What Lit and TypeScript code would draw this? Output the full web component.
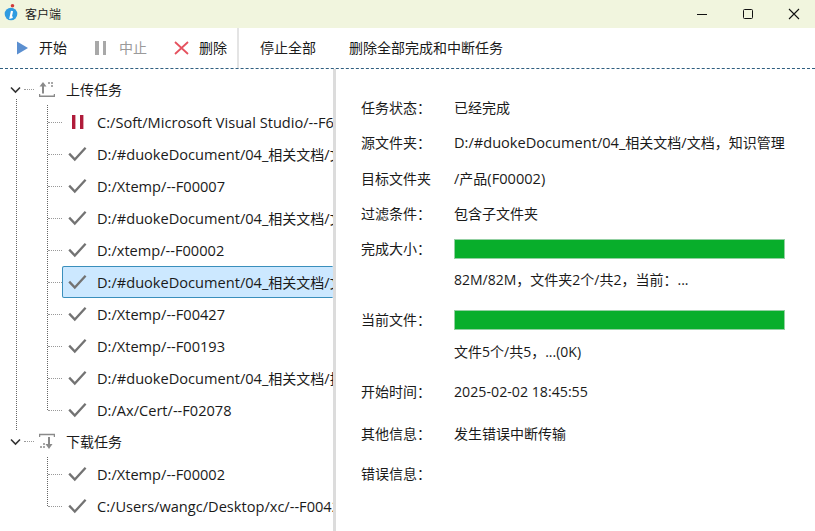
import { LitElement, html, css } from "lit";
import { customElement } from "lit/decorators.js";

const CHECK = html`<svg class="ic" width="19" height="16" viewBox="0 0 19 16"><path d="M1.2 7.6 L6.8 13.6 L17.6 1.8" fill="none" stroke="#737373" stroke-width="2.3"/></svg>`;
const PAUSE_RED = html`<svg class="ic" width="19" height="16" viewBox="0 0 19 16"><rect x="4" y="1" width="3.4" height="14" fill="#b01c3a"/><rect x="12" y="1" width="3.4" height="14" fill="#b01c3a"/></svg>`;

const upload = [
  { t: "C:/Soft/Microsoft Visual Studio/--F60012", i: PAUSE_RED },
  { t: "D:/#duokeDocument/04_相关文档/文档，知识管理--F00002", i: CHECK },
  { t: "D:/Xtemp/--F00007", i: CHECK },
  { t: "D:/#duokeDocument/04_相关文档/文档，知识管理--F00002", i: CHECK },
  { t: "D:/xtemp/--F00002", i: CHECK },
  { t: "D:/#duokeDocument/04_相关文档/文档，知识管理--F00002", i: CHECK, sel: true },
  { t: "D:/Xtemp/--F00427", i: CHECK },
  { t: "D:/Xtemp/--F00193", i: CHECK },
  { t: "D:/#duokeDocument/04_相关文档/技术文档--F00002", i: CHECK },
  { t: "D:/Ax/Cert/--F02078", i: CHECK },
];
const download = [
  { t: "D:/Xtemp/--F00002", i: CHECK },
  { t: "C:/Users/wangc/Desktop/xc/--F00421", i: CHECK },
];

/* Latin runs are set slightly larger than the CJK runs, as in the original UI font. */
function mixed(text: string) {
  return text
    .split(/([\u0020-\u007e]+)/)
    .filter((p) => p)
    .map((p) => (/^[\u0020-\u007e]/.test(p) ? html`<span class="l">${p}</span>` : p));
}

@customElement("app-root")
export class AppRoot extends LitElement {
  static styles = css`
    :host {
      display: flex;
      flex-direction: column;
      width: 815px;
      height: 531px;
      overflow: hidden;
      background: #fff;
      color: #1a1a1a;
      font-family: "Open Sans", "Noto Sans CJK SC", sans-serif;
      font-size: 14px;
    }
    .l { font-size: 14.6px; }
    .date .l { font-size: 14.2px; }
    .digits .l { font-size: 14px; }
    .title {
      height: 28px;
      background: #f1f5de;
      display: flex;
      align-items: center;
      flex: none;
    }
    .logo { margin-left: 4px; margin-right: 4px; }
    .title-text { font-size: 12px; flex: 1; padding-bottom: 1px; }
    .win {
      width: 46px;
      height: 28px;
      padding-left: 3px;
      box-sizing: border-box;
      display: flex;
      align-items: center;
      justify-content: center;
    }
    .toolbar {
      height: 40px;
      flex: none;
      display: flex;
      align-items: stretch;
      border-bottom: 1px dashed #2f5f80;
    }
    .tb { display: flex; align-items: center; }
    .tb span { padding-bottom: 2px; }
    .tb svg { flex: none; }
    .start { padding-left: 16px; }
    .start span { margin-left: 10px; }
    .stop { margin-left: 28px; color: #9a9a9a; }
    .stop span { margin-left: 13px; }
    .del { margin-left: 27px; }
    .del span { margin-left: 10px; }
    .sep { width: 2px; background: #e4e4e4; margin-left: 10px; }
    .stopall { margin-left: 21px; }
    .delall { margin-left: 33px; }
    .main { flex: 1; display: flex; min-height: 0; }
    .tree {
      width: 333px;
      flex: none;
      overflow: hidden;
      padding-top: 5px;
      box-sizing: border-box;
    }
    .treebody { position: relative; }
    .split { width: 3px; flex: none; background: #dcdcdc; }
    .group { position: relative; }
    .row {
      height: 32px;
      display: flex;
      align-items: center;
      white-space: nowrap;
      position: relative;
      box-sizing: border-box;
    }
    .row > span.t { padding-bottom: 1px; }
    .grow { padding-left: 10px; }
    .gicon { position: absolute; left: 39px; top: 7px; }
    .gicon svg { display: block; }
    .gtext { position: absolute; left: 66px; padding-bottom: 2px; }
    .gdots {
      position: absolute;
      left: 24px;
      width: 10px;
      top: 15px;
      border-top: 1px dotted #999;
    }
    .chev { flex: none; margin-top: -1px; }
    .item { margin-left: 62px; padding-left: 5px; border: 1px solid transparent; }
    .item.sel {
      background: #cce8ff;
      border-color: #3a8fbc;
      border-right-color: transparent;
      border-radius: 2px 0 0 2px;
    }
    .item::before {
      content: "";
      position: absolute;
      left: -15px;
      width: 14px;
      top: 15px;
      border-top: 1px dotted #999;
    }
    .ic { flex: none; margin-right: 10px; }
    .vline1, .vline2 {
      position: absolute;
      border-left: 1px dotted #666;
    }
    .vline1 { left: 16px; top: 25px; height: 331px; }
    .vline2 { left: 47px; top: 31px; bottom: 16px; }
    .detail {
      flex: 1;
      padding: 28px 30px 0 25px;
      box-sizing: border-box;
      min-width: 0;
    }
    .f {
      display: flex;
      height: 20px;
      align-items: center;
      margin-top: 15px;
      white-space: nowrap;
    }
    .f:first-child { margin-top: 0; }
    .k { width: 93px; flex: none; }
    .m16 { margin-top: 16px; }
    .m11 { margin-top: 11px; }
    .m20 { margin-top: 20px; }
    .m12 { margin-top: 12px; }
    .m22 { margin-top: 22px; }
    .bar {
      width: 331px;
      height: 20px;
      box-sizing: border-box;
      background: #08ae2b;
      border: 1px solid #93d0a2;
      margin-top: 2px;
    }
  `;

  private item(r: any) {
    return html`<div class="row item ${r.sel ? "sel" : ""}">${r.i}<span class="t">${mixed(r.t)}</span></div>`;
  }

  private group(label: string, icon: unknown, rows: any[]) {
    return html`<div class="group">
      <div class="row grow">
        <svg class="chev" width="11" height="8" viewBox="0 0 11 8"><path d="M1 1.5 L5.5 6 L10 1.5" fill="none" stroke="#333" stroke-width="1.6"/></svg>
        <div class="gdots"></div>
        <span class="gicon">${icon}</span>
        <span class="gtext">${label}</span>
      </div>
      <div class="vline2"></div>
      ${rows.map((r) => this.item(r))}
    </div>`;
  }

  render() {
    const upIcon = html`<svg width="16" height="17" viewBox="0 0 16 17">
      <path d="M0.5 13 V15.2 H15.5 V13" fill="none" stroke="#8a8a8a" stroke-width="1.5"/>
      <path d="M4 4 V12.5" stroke="#8a8a8a" stroke-width="2"/>
      <path d="M0.5 5.5 L4 1 L7.5 5.5 Z" fill="#8a8a8a"/>
      <path d="M9 1 h2 v2 h-2z M12 1 h2 v2 h-2z M12 4 h2 v2 h-2z" fill="#a8a8a8"/>
    </svg>`;
    const downIcon = html`<svg width="16" height="17" viewBox="0 0 16 17">
      <path d="M0.5 4 V1.5 H15.5 V4" fill="none" stroke="#8a8a8a" stroke-width="1.5"/>
      <path d="M10 4 V12" stroke="#8a8a8a" stroke-width="2"/>
      <path d="M6.5 11 L10 16 L13.5 11 Z" fill="#8a8a8a"/>
      <path d="M1 13 h2 v2 h-2z M4 13 h2 v2 h-2z M4 10 h2 v2 h-2z" fill="#a8a8a8"/>
    </svg>`;
    return html`
      <div class="title">
        <svg class="logo" width="17" height="20" viewBox="0 0 17 20">
          <circle cx="7" cy="10" r="6.3" fill="#2f9be0"/>
          <circle cx="8.5" cy="1.8" r="1.8" fill="#d23a3a"/>
          <path d="M8 7 L6.6 13.5 L8.6 13" fill="none" stroke="#fff" stroke-width="2.2"/>
        </svg>
        <span class="title-text">客户端</span>
        <div class="win"><svg width="12" height="12" viewBox="0 0 12 12"><path d="M1 6.5H11" stroke="#111"/></svg></div>
        <div class="win"><svg width="12" height="12" viewBox="0 0 12 12"><rect x="1.5" y="1.5" width="9" height="9" rx="1" fill="none" stroke="#111"/></svg></div>
        <div class="win"><svg width="12" height="12" viewBox="0 0 12 12"><path d="M1 1L11 11M11 1L1 11" stroke="#111" stroke-width="1.1"/></svg></div>
      </div>
      <div class="toolbar">
        <div class="tb start"><svg width="13" height="14" viewBox="0 0 13 14"><path d="M1 0.5 L12 7 L1 13.5Z" fill="#5b8fd0"/></svg><span>开始</span></div>
        <div class="tb stop"><svg width="11" height="14" viewBox="0 0 11 14"><rect x="0" y="0" width="4" height="14" fill="#a8a8a8"/><rect x="8" y="0" width="3" height="14" fill="#a8a8a8"/></svg><span>中止</span></div>
        <div class="tb del"><svg width="15" height="14" viewBox="0 0 15 14"><path d="M1 1 L14 13 M14 1 L1 13" stroke="#e5525f" stroke-width="1.8" fill="none"/></svg><span>删除</span></div>
        <div class="sep"></div>
        <div class="tb stopall"><span>停止全部</span></div>
        <div class="tb delall"><span>删除全部完成和中断任务</span></div>
      </div>
      <div class="main">
        <div class="tree">
          <div class="treebody">
            <div class="vline1"></div>
            ${this.group("上传任务", upIcon, upload)}
            ${this.group("下载任务", downIcon, download)}
          </div>
        </div>
        <div class="split"></div>
        <div class="detail">
          <div class="f"><div class="k">任务状态：</div><div>已经完成</div></div>
          <div class="f"><div class="k">源文件夹：</div><div>${mixed("D:/#duokeDocument/04_相关文档/文档，知识管理")}</div></div>
          <div class="f m16"><div class="k">目标文件夹</div><div>${mixed("/产品(F00002)")}</div></div>
          <div class="f"><div class="k">过滤条件：</div><div>包含子文件夹</div></div>
          <div class="f"><div class="k">完成大小：</div><div class="bar"></div></div>
          <div class="f m11"><div class="k"></div><div class="digits">${mixed("82M/82M，文件夹2个/共2，当前：...")}</div></div>
          <div class="f m20"><div class="k">当前文件：</div><div class="bar"></div></div>
          <div class="f m12"><div class="k"></div><div class="digits">${mixed("文件5个/共5，...(0K)")}</div></div>
          <div class="f m20"><div class="k">开始时间：</div><div class="date">${mixed("2025-02-02 18:45:55")}</div></div>
          <div class="f m22"><div class="k">其他信息：</div><div>发生错误中断传输</div></div>
          <div class="f m20"><div class="k">错误信息：</div><div></div></div>
        </div>
      </div>
    `;
  }
}
